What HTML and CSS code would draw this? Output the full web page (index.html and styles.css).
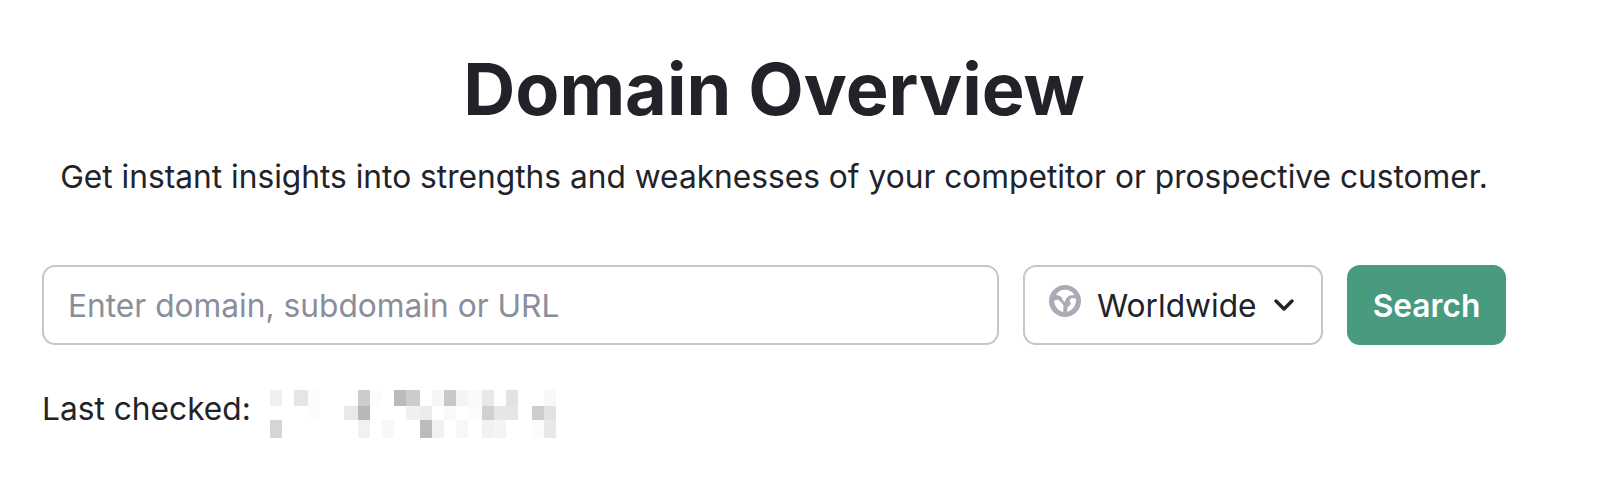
FILE: index.html
```html
<!DOCTYPE html>
<html lang="en">
<head>
<meta charset="utf-8">
<title>Domain Overview</title>
<link rel="stylesheet" href="styles.css">
</head>
<body>
<main class="page">
  <h1 class="title">Domain Overview</h1>
  <p class="subtitle">Get instant insights into strengths and weaknesses of your competitor or prospective customer.</p>
  <form class="search-row">
    <input class="domain-input" type="text" placeholder="Enter domain, subdomain or URL">
    <button class="region" type="button">
      <svg class="globe" viewBox="0 0 32 32" aria-hidden="true">
        <circle cx="16" cy="16" r="16" fill="#a9abb6"/>
        <path d="M7 10C9 6.500 12 4.800 16 4.800C20 4.800 23.500 6.800 25.500 10L20.500 10.500L17 13.500L16 17L14 15.500L12.500 12L9.500 10.500Z" fill="#fff"/>
        <path d="M5 15.500L9 14.500L12.500 17.500L14.500 20.500L14.200 27C9 26 5.800 21.500 5 15.500Z" fill="#fff"/>
        <path d="M27 13.500C27.500 20 24 25 18 27L18.500 22.500L22 19L20.500 15.500L22.500 13Z" fill="#fff"/>
      </svg>
      <span class="region-label">Worldwide</span>
      <svg class="chevron" viewBox="0 0 20 12" aria-hidden="true">
        <path d="M2 2L10 10L18 2" fill="none" stroke="#212329" stroke-width="3.400" stroke-linecap="round" stroke-linejoin="round"/>
      </svg>
    </button>
    <button class="search" type="button">Search</button>
  </form>
  <div class="last-checked">
    <span>Last checked:</span>
    <svg class="blur" viewBox="0 0 286 48" preserveAspectRatio="none" aria-hidden="true" shape-rendering="crispEdges">
      <rect x="0" y="0" width="12" height="16" fill="#f0f0f0"/>
      <rect x="24" y="0" width="14" height="16" fill="#e5e5e5"/>
      <rect x="38" y="0" width="12" height="16" fill="#fcfcfc"/>
      <rect x="88" y="0" width="12" height="16" fill="#ccc"/>
      <rect x="100" y="0" width="12" height="16" fill="#fcfcfc"/>
      <rect x="124" y="0" width="12" height="16" fill="#bbb"/>
      <rect x="136" y="0" width="14" height="16" fill="#ccc"/>
      <rect x="162" y="0" width="12" height="16" fill="#f6f6f6"/>
      <rect x="174" y="0" width="12" height="16" fill="#c8c8c8"/>
      <rect x="186" y="0" width="12" height="16" fill="#f4f4f4"/>
      <rect x="198" y="0" width="14" height="16" fill="#fafafa"/>
      <rect x="212" y="0" width="12" height="16" fill="#e8e8e8"/>
      <rect x="236" y="0" width="12" height="16" fill="#e2e2e2"/>
      <rect x="274" y="0" width="12" height="16" fill="#f8f8f8"/>
      <rect x="38" y="16" width="12" height="14" fill="#fcfcfc"/>
      <rect x="74" y="16" width="14" height="14" fill="#e9e9e9"/>
      <rect x="88" y="16" width="12" height="14" fill="#b8b8b8"/>
      <rect x="136" y="16" width="14" height="14" fill="#f0f0f0"/>
      <rect x="150" y="16" width="12" height="14" fill="#ebebeb"/>
      <rect x="174" y="16" width="12" height="14" fill="#fafafa"/>
      <rect x="198" y="16" width="14" height="14" fill="#fcfcfc"/>
      <rect x="212" y="16" width="12" height="14" fill="#d0d0d0"/>
      <rect x="224" y="16" width="24" height="14" fill="#e6e6e6"/>
      <rect x="262" y="16" width="12" height="14" fill="#cdcdcd"/>
      <rect x="274" y="16" width="12" height="14" fill="#e2e2e2"/>
      <rect x="0" y="30" width="12" height="18" fill="#d5d5d5"/>
      <rect x="88" y="30" width="12" height="18" fill="#f1f1f1"/>
      <rect x="112" y="30" width="12" height="18" fill="#f7f7f7"/>
      <rect x="150" y="30" width="12" height="18" fill="#bbb"/>
      <rect x="162" y="30" width="12" height="18" fill="#f1f1f1"/>
      <rect x="186" y="30" width="12" height="18" fill="#f7f7f7"/>
      <rect x="212" y="30" width="12" height="18" fill="#f1f1f1"/>
      <rect x="224" y="30" width="12" height="18" fill="#f4f4f4"/>
      <rect x="262" y="30" width="12" height="18" fill="#fcfcfc"/>
      <rect x="274" y="30" width="12" height="18" fill="#e8e8e8"/>
    </svg>
  </div>
</main>
</body>
</html>
```

FILE: styles.css
```css
* { box-sizing: border-box; }
html, body { margin: 0; background: #fff; }
body { font-family: Inter, "Liberation Sans", sans-serif; color: #212329; }
.page { width: 1604px; height: 492px; padding: 43px 98px 0 42px; display: flex; flex-direction: column; overflow: hidden; }
.title { margin: 0; font-size: 72px; line-height: 92px; font-weight: 700; text-align: center; }
.subtitle { margin: 21px 0 0; font-size: 31.7px; line-height: 42px; text-align: center; }
.search-row { display: flex; gap: 24px; height: 80px; margin-top: 67px; }
.domain-input { flex: 1; min-width: 0; height: 100%; padding: 0 24px; border: 2px solid #c4c7cf; border-radius: 13px; font: 400 31.7px Inter, sans-serif; color: #212329; background: #fff; outline: none; }
.domain-input::placeholder { color: #8a8e9b; opacity: 1; }
.region { width: 300px; height: 100%; padding: 0 0 0 24px; display: flex; align-items: center; border: 2px solid #c4c7cf; border-radius: 13px; background: #fff; font: 400 31.7px Inter, sans-serif; color: #212329; }
.globe { width: 32px; height: 32px; flex: none; margin-top: -8px; }
.region-label { margin-left: 16px; }
.chevron { width: 20px; height: 12px; flex: none; margin-left: 17px; }
.search { width: 159px; height: 100%; border: 0; border-radius: 13px; background: #489b7e; color: #fff; font: 600 31.7px Inter, sans-serif; }
.last-checked { display: flex; align-items: flex-start; margin-top: 46px; font-size: 31.7px; line-height: 36px; }
.blur { width: 286px; height: 48px; flex: none; margin-left: 19px; margin-top: -1px; }
```
